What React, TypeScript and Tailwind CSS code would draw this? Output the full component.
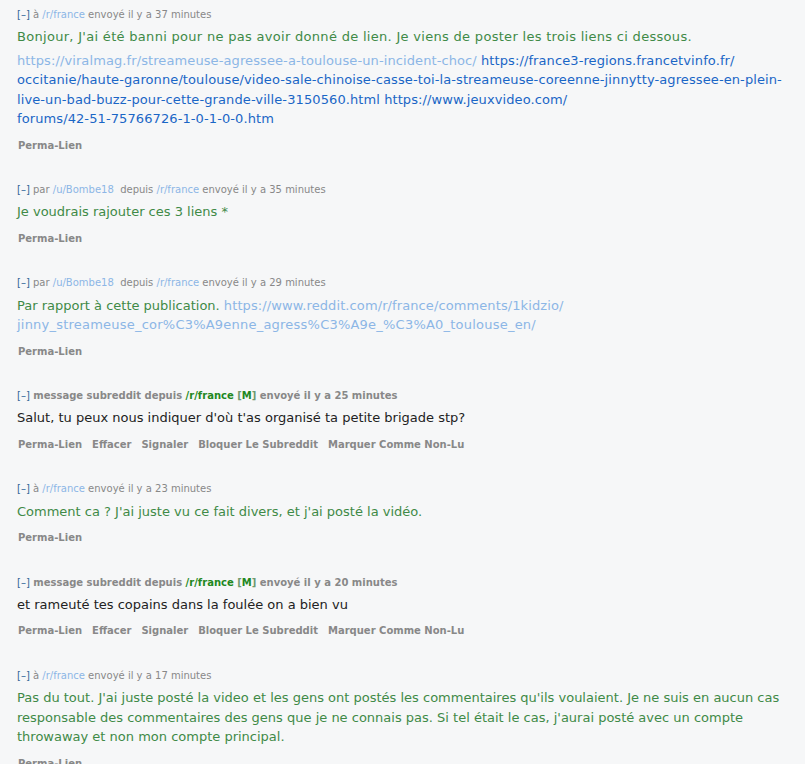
import React from 'react';

type Part = { t: string; c?: 'light' | 'dark'; wide?: boolean };
type Msg = {
  mod?: boolean;
  by?: string;
  prefix: 'à' | 'par' | 'mod';
  ago: string;
  paras: (Part | 'br')[][];
  actions?: boolean;
};

const messages: Msg[] = [
  {
    prefix: 'à',
    ago: '37',
    paras: [
      [{ t: "Bonjour, J'ai été banni pour ne pas avoir donné de lien. Je viens de poster les trois liens ci dessous.", wide: true }],
      [
        { t: 'https://viralmag.fr/streameuse-agressee-a-toulouse-un-incident-choc/', c: 'light' },
        { t: ' ' },
        { t: 'https://france3-regions.francetvinfo.fr/', c: 'dark' },
        'br',
        { t: 'occitanie/haute-garonne/toulouse/video-sale-chinoise-casse-toi-la-streameuse-coreenne-jinnytty-agressee-en-plein-', c: 'dark' },
        'br',
        { t: 'live-un-bad-buzz-pour-cette-grande-ville-3150560.html', c: 'dark' },
        { t: ' ' },
        { t: 'https://www.jeuxvideo.com/', c: 'dark' },
        'br',
        { t: 'forums/42-51-75766726-1-0-1-0-0.htm', c: 'dark' },
      ],
    ],
  },
  {
    prefix: 'par',
    by: '/u/Bombe18',
    ago: '35',
    paras: [[{ t: 'Je voudrais rajouter ces 3 liens *' }]],
  },
  {
    prefix: 'par',
    by: '/u/Bombe18',
    ago: '29',
    paras: [
      [
        { t: 'Par rapport à cette publication. ' },
        { t: 'https://www.reddit.com/r/france/comments/1kidzio/', c: 'light' },
        'br',
        { t: 'jinny_streameuse_cor%C3%A9enne_agress%C3%A9e_%C3%A0_toulouse_en/', c: 'light', wide: true },
      ],
    ],
  },
  {
    prefix: 'mod',
    mod: true,
    ago: '25',
    actions: true,
    paras: [[{ t: "Salut, tu peux nous indiquer d'où t'as organisé ta petite brigade stp?" }]],
  },
  {
    prefix: 'à',
    ago: '23',
    paras: [[{ t: "Comment ca ? J'ai juste vu ce fait divers, et j'ai posté la vidéo." }]],
  },
  {
    prefix: 'mod',
    mod: true,
    ago: '20',
    actions: true,
    paras: [[{ t: 'et rameuté tes copains dans la foulée on a bien vu' }]],
  },
  {
    prefix: 'à',
    ago: '17',
    paras: [
      [
        { t: "Pas du tout. J'ai juste posté la video et les gens ont postés les commentaires qu'ils voulaient. Je ne suis en aucun cas" },
        'br',
        { t: "responsable des commentaires des gens que je ne connais pas. Si tel était le cas, j'aurai posté avec un compte" },
        'br',
        { t: 'throwaway et non mon compte principal.' },
      ],
    ],
  },
];

const Tagline: React.FC<{ m: Msg }> = ({ m }) => {
  if (m.mod) {
    return (
      <div className="text-[10px] leading-[14px] font-bold text-[#888] whitespace-nowrap">
        <span className="font-normal text-[#369]">[–]</span> message subreddit depuis{' '}
        <span className="text-[#228822]">/r/france</span>{' '}
        <span className="text-[#6f9a6f]">[</span>
        <span className="text-[#228822]">M</span>
        <span className="text-[#6f9a6f]">]</span> envoyé il y a {m.ago} minutes
      </div>
    );
  }
  return (
    <div className="text-[10px] leading-[14px] text-[#888] whitespace-nowrap">
      <span className="text-[#369]">[–]</span>{' '}
      {m.prefix === 'par' ? (
        <>
          par <span className="text-[#8cb6e6]">{m.by}</span>&nbsp;&nbsp;depuis{' '}
        </>
      ) : (
        <>à </>
      )}
      <span className="text-[#8cb6e6]">/r/france</span> envoyé il y a {m.ago} minutes
    </div>
  );
};

export default function App() {
  return (
    <div className="min-h-screen bg-[#f6f7f8] font-['DejaVu_Sans',Verdana,sans-serif] pl-[17px] pt-[7.5px] overflow-hidden">
      {messages.map((m, i) => (
        <div key={i} className="mb-[30.4px]">
          <Tagline m={m} />
          <div className={`mt-[5.5px] text-[13px] leading-[19.4px] ${m.mod ? 'text-[#222]' : 'text-[#3f8a47]'}`}>
            {m.paras.map((p, j) => (
              <p key={j} className={`whitespace-nowrap ${j > 0 ? 'mt-[4.5px]' : ''}`}>
                {p.map((part, k) =>
                  part === 'br' ? (
                    <br key={k} />
                  ) : part.c ? (
                    <a
                      key={k}
                      href="#"
                      className={`${part.c === 'light' ? 'text-[#8cb6e6]' : 'text-[#1a66c6]'} ${part.wide ? 'tracking-[0.22px]' : 'tracking-[0.1px]'}`}
                    >
                      {part.t}
                    </a>
                  ) : (
                    <span key={k} className={part.wide ? 'tracking-[0.3px]' : ''}>
                      {part.t}
                    </span>
                  )
                )}
              </p>
            ))}
          </div>
          <div className="mt-[10px] pl-px flex gap-[10px] text-[10px] leading-[14px] font-bold text-[#888]">
            <span>Perma-Lien</span>
            {m.actions && (
              <>
                <span>Effacer</span>
                <span>Signaler</span>
                <span>Bloquer Le Subreddit</span>
                <span>Marquer Comme Non-Lu</span>
              </>
            )}
          </div>
        </div>
      ))}
    </div>
  );
}
